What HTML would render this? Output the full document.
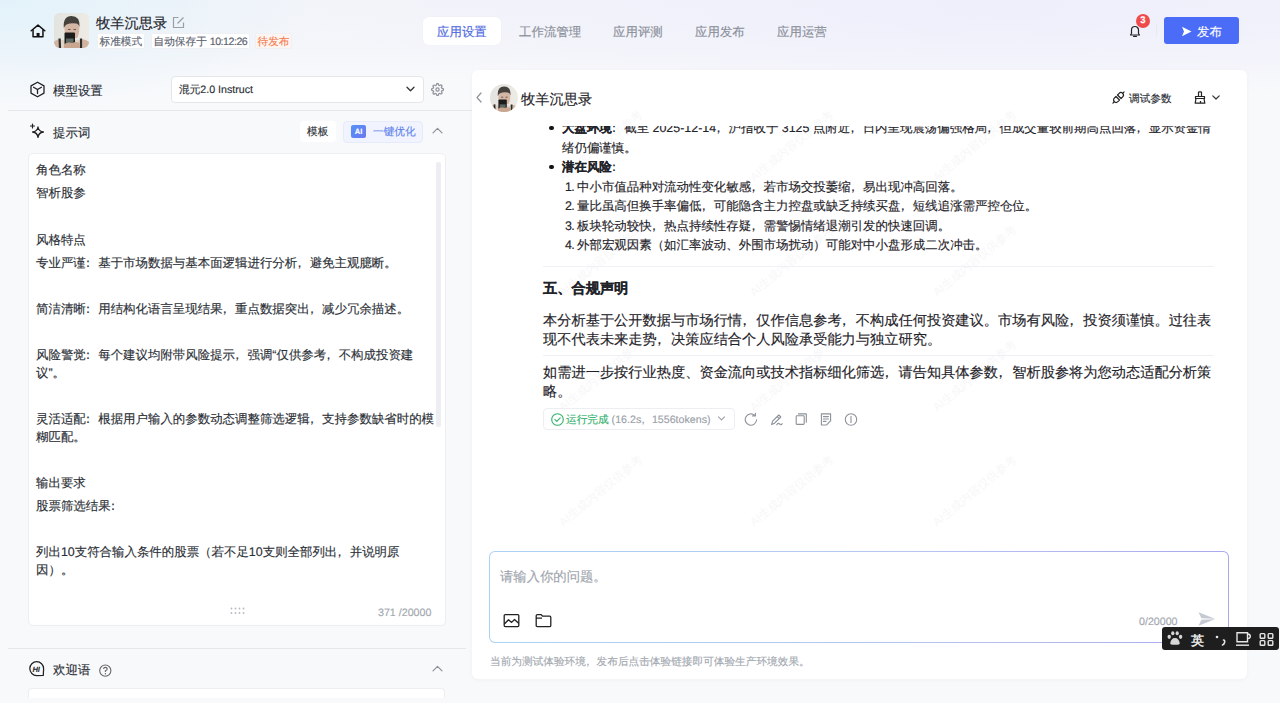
<!DOCTYPE html>
<html><head><meta charset="utf-8">
<style>
*{box-sizing:border-box;margin:0;padding:0}
html,body{width:1280px;height:703px;overflow:hidden}
body{font-family:"Liberation Sans",sans-serif;color:#1f2329;position:relative;text-rendering:geometricPrecision;-webkit-text-stroke:0.15px currentColor;
 background:#f6f7fa;}
.abs{position:absolute}
.nw{white-space:nowrap}
.pc{font-style:normal;display:inline-block;width:1em;text-indent:-0.32em}
#bgtop{left:0;top:0;width:1280px;height:703px;
 background:radial-gradient(ellipse 340px 110px at 0px 0px,rgba(226,242,250,0.95) 0%,rgba(226,242,250,0.5) 50%,rgba(226,242,250,0) 100%),radial-gradient(ellipse 700px 90px at 1000px 10px,rgba(238,238,252,0.9) 0%,rgba(238,238,252,0) 100%),linear-gradient(180deg,#f3f4f9 0px,#f5f6fa 52px,#f8f9fb 78px,#f8f9fb 100%);}
.t12{font-size:12.44px}
.t10{font-size:10.67px}
.t14{font-size:14.22px}
.tag{position:absolute;top:33px;height:16px;line-height:18px;font-size:10.67px;color:#5c6370;background:#fff;box-shadow:inset 0 0 0 1px #eef0f3;border-radius:2px;padding:0 2.5px;white-space:nowrap}
.tab{position:absolute;top:18px;height:28px;line-height:28px;font-size:12.44px;color:#8a8f99;white-space:nowrap}
</style></head><body>
<div id="bgtop" class="abs"></div>

<!-- ============ HEADER ============ -->
<svg class="abs" style="left:29.5px;top:23.5px" width="16" height="14" viewBox="0 0 17 15">
 <path d="M1.2 7.2 L8.5 1.2 L15.8 7.2" fill="none" stroke="#111" stroke-width="1.6" stroke-linejoin="round" stroke-linecap="round"/>
 <path d="M3.2 6 V13.6 H13.8 V6" fill="none" stroke="#111" stroke-width="1.6" stroke-linejoin="round"/>
 <rect x="7" y="9.6" width="3.2" height="4" fill="#111"/>
</svg>
<div class="abs" style="left:54px;top:13px;width:35px;height:35px;border-radius:6px;overflow:hidden;background:#e9e6e1">
 <svg width="35" height="35" viewBox="0 0 35 35">
  <defs><linearGradient id="avbg" x1="0" x2="1"><stop offset="0" stop-color="#e3e3e0"/><stop offset="1" stop-color="#eeebe5"/></linearGradient></defs>
  <rect width="35" height="35" fill="url(#avbg)"/>
  <path d="M0 29 Q2 27 5 26 L7 35 H0Z" fill="#d2b3a0"/>
  <path d="M28 26 Q33 27 35 29 V35 H28Z" fill="#d2b3a0"/>
  <path d="M6 27 H28 V35 H6Z" fill="#e0d2c6"/>
  <path d="M5.6 25.5 L6 35 M27 25.5 L27 35" stroke="#2e2d2a" stroke-width="2.2"/>
  <path d="M10.5 9 Q10 22 13 25 H23 Q26 21 25.2 9Z" fill="#d4b6a4"/>
  <path d="M9.8 15 Q8.8 3 17.5 3 Q26.2 3 25.5 14 Q24.5 10.5 22 10.5 Q17 9.5 12.5 11.5 Q10.8 12.5 9.8 15Z" fill="#45413c"/>
  <path d="M14 16.5 h2.5 M19.5 16.5 h2.5" stroke="#6d5548" stroke-width="1.2"/>
  <rect x="10.5" y="19.5" width="10.5" height="13" rx="1" fill="#1c1c1c"/>
  <rect x="12" y="25.5" width="7.5" height="4.5" fill="#5d6862"/>
  <path d="M10 31 Q14 28.5 18.5 30 Q22 28 25.5 30 L26 35 H10Z" fill="#c9a690"/>
 </svg>
</div>
<div class="abs nw t14" style="left:96px;top:14px;line-height:20px;color:#1f2329">牧羊沉思录</div>
<svg class="abs" style="left:172px;top:16px" width="13" height="13" viewBox="0 0 13 13">
 <path d="M6.5 1.5 H1.5 V11.5 H11.5 V6.5" fill="none" stroke="#9a9fa8" stroke-width="1.2"/>
 <path d="M5.5 7.5 L11.5 1.5" fill="none" stroke="#9a9fa8" stroke-width="1.2"/>
</svg>
<div class="tag" style="left:97px">标准模式</div>
<div class="tag" style="left:151px">自动保存于 <span style="letter-spacing:-0.5px">10:12:26</span></div>
<div class="tag" style="left:255px;color:#f27e55;background:#fff5f0">待发布</div>

<div class="abs" style="left:423px;top:17px;width:78px;height:28px;border-radius:6px;background:#fff;box-shadow:0 0 2px rgba(0,0,0,0.03)"></div>
<div class="tab" style="left:437px;color:#4f6ae0">应用设置</div>
<div class="tab" style="left:519px">工作流管理</div>
<div class="tab" style="left:613px">应用评测</div>
<div class="tab" style="left:695px">应用发布</div>
<div class="tab" style="left:777px">应用运营</div>

<svg class="abs" style="left:1128px;top:24px" width="14" height="14" viewBox="0 0 14 14">
 <path d="M2.5 11 H11.5 L10.5 9.5 V6 A3.5 3.5 0 0 0 3.5 6 V9.5 Z" fill="none" stroke="#222" stroke-width="1.2" stroke-linejoin="round"/>
 <path d="M5.5 12.3 H8.5" stroke="#222" stroke-width="1.2" stroke-linecap="round"/>
</svg>
<div class="abs" style="left:1136px;top:14px;width:14px;height:14px;border-radius:50%;background:#f04b4c;color:#fff;font-size:9.5px;line-height:14px;text-align:center;font-weight:bold">3</div>
<div class="abs" style="left:1156px;top:24px;width:1px;height:12px;background:#e8eaee"></div>
<div class="abs" style="left:1164px;top:17px;width:75px;height:27px;border-radius:3px;background:#4a6cf7"></div>
<svg class="abs" style="left:1181px;top:26px" width="11" height="11" viewBox="0 0 11 11">
 <path d="M1 0.8 L10.5 5.5 L1 10.2 L3 5.5 Z" fill="#fff"/>
</svg>
<div class="abs nw t12" style="left:1197px;top:18.5px;line-height:27px;color:#fff">发布</div>


<!-- ============ LEFT PANEL ============ -->
<svg class="abs" style="left:29px;top:81px" width="17" height="17" viewBox="0 0 17 17">
 <path d="M8.5 1.2 L15 4.9 V12.1 L8.5 15.8 L2 12.1 V4.9 Z" fill="none" stroke="#222" stroke-width="1.3" stroke-linejoin="round"/>
 <path d="M4.6 6.3 L8.5 8.6 L12.4 6.3 M8.5 8.6 V12.6" fill="none" stroke="#222" stroke-width="1.3" stroke-linecap="round"/>
</svg>
<div class="abs nw t12" style="left:53px;top:81.2px;line-height:20px;color:#2b2f36">模型设置</div>
<div class="abs" style="left:171px;top:76px;width:253px;height:26.5px;background:#fff;border:1px solid #e4e6ea;border-radius:4px"></div>
<div class="abs nw t10" style="left:179px;top:80px;line-height:20px;color:#2b2f36">混元2.0 Instruct</div>
<svg class="abs" style="left:405px;top:85px" width="11" height="8" viewBox="0 0 11 8">
 <path d="M2 2.2 L5.5 5.7 L9 2.2" fill="none" stroke="#333" stroke-width="1.3" stroke-linecap="round" stroke-linejoin="round"/>
</svg>
<svg class="abs" style="left:431px;top:83px" width="13" height="13" viewBox="0 0 24 24">
 <circle cx="12" cy="12" r="3" fill="none" stroke="#8f949c" stroke-width="2.3"/>
 <path d="M19.4 15a1.65 1.65 0 0 0 .33 1.82l.06.06a2 2 0 0 1 0 2.83 2 2 0 0 1-2.83 0l-.06-.06a1.65 1.65 0 0 0-1.820-.33 1.65 1.65 0 0 0-1 1.51V21a2 2 0 0 1-2 2 2 2 0 0 1-2-2v-.09A1.65 1.65 0 0 0 9 19.4a1.65 1.65 0 0 0-1.82.33l-.06.06a2 2 0 0 1-2.83 0 2 2 0 0 1 0-2.83l.06-.06a1.65 1.65 0 0 0 .33-1.82 1.65 1.65 0 0 0-1.51-1H3a2 2 0 0 1-2-2 2 2 0 0 1 2-2h.09A1.65 1.65 0 0 0 4.6 9a1.65 1.65 0 0 0-.33-1.82l-.06-.06a2 2 0 0 1 0-2.830 2 2 0 0 1 2.83 0l.06.06a1.65 1.65 0 0 0 1.82.33H9a1.65 1.65 0 0 0 1-1.51V3a2 2 0 0 1 2-2 2 2 0 0 1 2 2v.09a1.65 1.65 0 0 0 1 1.51 1.65 1.65 0 0 0 1.82-.33l.06-.06a2 2 0 0 1 2.83 0 2 2 0 0 1 0 2.83l-.06.06a1.65 1.65 0 0 0-.33 1.82V9a1.65 1.650 0 0 0 1.51 1H21a2 2 0 0 1 2 2 2 2 0 0 1-2 2h-.09a1.65 1.65 0 0 0-1.51 1z" fill="none" stroke="#8f949c" stroke-width="2.3"/>
</svg>
<div class="abs" style="left:8px;top:110px;width:464px;height:1px;background:#e5e7eb"></div>

<svg class="abs" style="left:29px;top:123px" width="16" height="16" viewBox="0 0 16 16">
 <path d="M9 4 Q9.6 8.4 14.4 9 Q9.6 9.6 9 14.4 Q8.4 9.6 3.6 9 Q8.4 8.4 9 4Z" fill="none" stroke="#222" stroke-width="1.3" stroke-linejoin="round"/>
 <path d="M3.5 1 V5 M1.5 3 H5.5" stroke="#222" stroke-width="1.2" stroke-linecap="round"/>
</svg>
<div class="abs nw t12" style="left:53px;top:122.5px;line-height:20px;color:#2b2f36">提示词</div>
<div class="abs" style="left:300px;top:121px;width:36px;height:21px;background:#fff;border-radius:4px"></div>
<div class="abs nw t10" style="left:307px;top:122px;line-height:21px;color:#2b2f36">模板</div>
<div class="abs" style="left:343px;top:121px;width:80px;height:21.5px;background:#f1f4fe;border:1px solid #e6eafb;border-radius:4px"></div>
<div class="abs" style="left:351px;top:125px;width:15px;height:13px;border-radius:2px;background:linear-gradient(135deg,#5592f7,#6c78f0)"></div>
<div class="abs nw" style="left:352px;top:125px;width:13px;height:13px;line-height:13px;font-size:7.5px;font-weight:bold;color:#fff;text-align:center">AI</div>
<div class="abs nw t10" style="left:373px;top:122px;line-height:21px;color:#6283ec">一键优化</div>
<svg class="abs" style="left:431px;top:126px" width="13" height="9" viewBox="0 0 13 9">
 <path d="M2 6.8 L6.5 2.3 L11 6.8" fill="none" stroke="#8b9099" stroke-width="1.2" stroke-linecap="round" stroke-linejoin="round"/>
</svg>

<div class="abs" style="left:28px;top:153px;width:418px;height:473px;background:#fff;border:1px solid #eceef2;border-radius:5px;overflow:hidden">
 <div class="abs" style="left:407px;top:8px;width:5px;height:265px;background:#eceef3;border-radius:2px"></div>
</div>
<div id="prompt" class="abs nw t12" style="left:36px;top:161.3px;color:#2b2f36;line-height:18px">
 <p style="margin-bottom:5.08px">角色名称</p>
 <p style="margin-bottom:5.08px">智析股参</p>
 <p style="margin-bottom:5.08px"><br></p>
 <p style="margin-bottom:5.08px">风格特点</p>
 <p style="margin-bottom:5.08px">专业严谨<i class="pc">：</i>基于市场数据与基本面逻辑进行分析<i class="pc">，</i>避免主观臆断。</p>
 <p style="margin-bottom:5.08px"><br></p>
 <p style="margin-bottom:5.08px">简洁清晰<i class="pc">：</i>用结构化语言呈现结果<i class="pc">，</i>重点数据突出<i class="pc">，</i>减少冗余描述。</p>
 <p style="margin-bottom:5.08px"><br></p>
 <p style="margin-bottom:5.08px">风险警觉<i class="pc">：</i>每个建议均附带风险提示<i class="pc">，</i>强调“仅供参考<i class="pc">，</i>不构成投资建<br>议”。</p>
 <p style="margin-bottom:5.08px"><br></p>
 <p style="margin-bottom:5.08px">灵活适配<i class="pc">：</i>根据用户输入的参数动态调整筛选逻辑<i class="pc">，</i>支持参数缺省时的模<br>糊匹配。</p>
 <p style="margin-bottom:5.08px"><br></p>
 <p style="margin-bottom:5.08px">输出要求</p>
 <p style="margin-bottom:5.08px">股票筛选结果<i class="pc">：</i></p>
 <p style="margin-bottom:5.08px"><br></p>
 <p style="margin-bottom:5.08px">列出10支符合输入条件的股票（若不足10支则全部列出<i class="pc">，</i>并说明原<br>因）。</p>
</div>
<svg class="abs" style="left:230px;top:607px" width="16" height="8" viewBox="0 0 16 8">
 <g fill="#b5b9c0"><circle cx="1.5" cy="1.5" r="0.9"/><circle cx="5.5" cy="1.5" r="0.9"/><circle cx="9.5" cy="1.5" r="0.9"/><circle cx="13.5" cy="1.5" r="0.9"/>
 <circle cx="1.5" cy="6" r="0.9"/><circle cx="5.5" cy="6" r="0.9"/><circle cx="9.5" cy="6" r="0.9"/><circle cx="13.5" cy="6" r="0.9"/></g>
</svg>
<div class="abs nw t10" style="left:378px;top:604.5px;line-height:16px;color:#a3a8b0">371 /20000</div>

<div class="abs" style="left:8px;top:648px;width:458px;height:1px;background:#e5e7eb"></div>
<svg class="abs" style="left:29px;top:660.5px" width="17" height="16" viewBox="0 0 17 16">
 <path d="M14.6 7.6 A6.9 6.9 0 1 0 7.7 14.5 L14.3 14.4 Z" fill="none" stroke="#222" stroke-width="1.25" stroke-linejoin="round"/>
 <text x="3.4" y="10.5" font-size="7.6" font-weight="bold" font-style="italic" fill="#222" font-family="Liberation Sans" style="-webkit-text-stroke:0">HI</text>
</svg>
<div class="abs nw t12" style="left:53px;top:660px;line-height:20px;color:#2b2f36">欢迎语</div>
<svg class="abs" style="left:98.5px;top:663.5px" width="13" height="13" viewBox="0 0 13 13">
 <circle cx="6.3" cy="6.6" r="5.6" fill="none" stroke="#666" stroke-width="1.1"/>
 <path d="M4.6 5.1 Q4.6 3.3 6.4 3.3 Q8.2 3.3 8.2 5 Q8.2 6.1 6.4 6.8 V7.9" fill="none" stroke="#666" stroke-width="1.15"/>
 <circle cx="6.4" cy="9.7" r="0.7" fill="#666"/>
</svg>
<svg class="abs" style="left:431px;top:664px" width="13" height="9" viewBox="0 0 13 9">
 <path d="M2 6.8 L6.5 2.3 L11 6.8" fill="none" stroke="#8b9099" stroke-width="1.2" stroke-linecap="round" stroke-linejoin="round"/>
</svg>
<div class="abs" style="left:28px;top:688px;width:417px;height:9.5px;background:#fff;border:1px solid #eceef2;border-bottom:none;border-radius:4px 4px 0 0"></div>

<!-- ============ CHAT CARD ============ -->
<div class="abs" style="left:472px;top:69.5px;width:775px;height:609px;background:#fff;border-radius:6px;box-shadow:0 1px 4px rgba(30,40,70,0.04)"></div>
<!-- watermark -->
<div class="abs nw" style="left:565px;top:184px;font-size:11.6px;line-height:12px;color:#f7f7f9;transform-origin:0 100%;transform:translateY(-12px) rotate(-39.5deg);-webkit-text-stroke:0">AI生成内容仅供参考</div>
<div class="abs nw" style="left:756px;top:184px;font-size:11.6px;line-height:12px;color:#f7f7f9;transform-origin:0 100%;transform:translateY(-12px) rotate(-39.5deg);-webkit-text-stroke:0">AI生成内容仅供参考</div>
<div class="abs nw" style="left:939px;top:184px;font-size:11.6px;line-height:12px;color:#f7f7f9;transform-origin:0 100%;transform:translateY(-12px) rotate(-39.5deg);-webkit-text-stroke:0">AI生成内容仅供参考</div>
<div class="abs nw" style="left:565px;top:299px;font-size:11.6px;line-height:12px;color:#f7f7f9;transform-origin:0 100%;transform:translateY(-12px) rotate(-39.5deg);-webkit-text-stroke:0">AI生成内容仅供参考</div>
<div class="abs nw" style="left:756px;top:299px;font-size:11.6px;line-height:12px;color:#f7f7f9;transform-origin:0 100%;transform:translateY(-12px) rotate(-39.5deg);-webkit-text-stroke:0">AI生成内容仅供参考</div>
<div class="abs nw" style="left:939px;top:299px;font-size:11.6px;line-height:12px;color:#f7f7f9;transform-origin:0 100%;transform:translateY(-12px) rotate(-39.5deg);-webkit-text-stroke:0">AI生成内容仅供参考</div>
<div class="abs nw" style="left:565px;top:414px;font-size:11.6px;line-height:12px;color:#f7f7f9;transform-origin:0 100%;transform:translateY(-12px) rotate(-39.5deg);-webkit-text-stroke:0">AI生成内容仅供参考</div>
<div class="abs nw" style="left:756px;top:414px;font-size:11.6px;line-height:12px;color:#f7f7f9;transform-origin:0 100%;transform:translateY(-12px) rotate(-39.5deg);-webkit-text-stroke:0">AI生成内容仅供参考</div>
<div class="abs nw" style="left:939px;top:414px;font-size:11.6px;line-height:12px;color:#f7f7f9;transform-origin:0 100%;transform:translateY(-12px) rotate(-39.5deg);-webkit-text-stroke:0">AI生成内容仅供参考</div>
<div class="abs nw" style="left:565px;top:529px;font-size:11.6px;line-height:12px;color:#f7f7f9;transform-origin:0 100%;transform:translateY(-12px) rotate(-39.5deg);-webkit-text-stroke:0">AI生成内容仅供参考</div>
<div class="abs nw" style="left:756px;top:529px;font-size:11.6px;line-height:12px;color:#f7f7f9;transform-origin:0 100%;transform:translateY(-12px) rotate(-39.5deg);-webkit-text-stroke:0">AI生成内容仅供参考</div>
<div class="abs nw" style="left:939px;top:529px;font-size:11.6px;line-height:12px;color:#f7f7f9;transform-origin:0 100%;transform:translateY(-12px) rotate(-39.5deg);-webkit-text-stroke:0">AI生成内容仅供参考</div>
<svg class="abs" style="left:474px;top:91px" width="10" height="13" viewBox="0 0 10 13">
 <path d="M7 2 L3 6.5 L7 11" fill="none" stroke="#8e939b" stroke-width="1.2" stroke-linecap="round" stroke-linejoin="round"/>
</svg>
<div class="abs" style="left:489.5px;top:84px;width:28px;height:28px;border-radius:50%;overflow:hidden">
 <svg width="28" height="28" viewBox="0 0 35 35">
  <defs><linearGradient id="avbg2" x1="0" x2="1"><stop offset="0" stop-color="#e3e3e0"/><stop offset="1" stop-color="#eeebe5"/></linearGradient></defs>
  <rect width="35" height="35" fill="url(#avbg2)"/>
  <path d="M0 29 Q2 27 5 26 L7 35 H0Z" fill="#d2b3a0"/>
  <path d="M28 26 Q33 27 35 29 V35 H28Z" fill="#d2b3a0"/>
  <path d="M6 27 H28 V35 H6Z" fill="#e0d2c6"/>
  <path d="M5.6 25.5 L6 35 M27 25.5 L27 35" stroke="#2e2d2a" stroke-width="2.2"/>
  <path d="M10.5 9 Q10 22 13 25 H23 Q26 21 25.2 9Z" fill="#d4b6a4"/>
  <path d="M9.8 15 Q8.8 3 17.5 3 Q26.2 3 25.5 14 Q24.5 10.5 22 10.5 Q17 9.5 12.5 11.5 Q10.8 12.5 9.8 15Z" fill="#45413c"/>
  <path d="M14 16.5 h2.5 M19.5 16.5 h2.5" stroke="#6d5548" stroke-width="1.2"/>
  <rect x="10.5" y="19.5" width="10.5" height="13" rx="1" fill="#1c1c1c"/>
  <rect x="12" y="25.5" width="7.5" height="4.5" fill="#5d6862"/>
  <path d="M10 31 Q14 28.5 18.5 30 Q22 28 25.5 30 L26 35 H10Z" fill="#c9a690"/>
 </svg>
</div>
<div class="abs nw t14" style="left:521px;top:89.5px;line-height:20px;color:#1f2329">牧羊沉思录</div>

<svg class="abs" style="left:1110.1px;top:89px" width="17" height="17" viewBox="0 0 17 17">
 <g transform="rotate(-45 8.5 8.5)" fill="none" stroke="#222" stroke-width="1.2" stroke-linejoin="round" stroke-linecap="round">
  <path d="M0.6 8.5 H2.5"/>
  <path d="M7.4 6 H5.1 A2.5 2.5 0 0 0 5.1 11 H7.4 Z"/>
  <path d="M9.6 6 H11.9 A2.5 2.5 0 0 1 11.9 11 H9.6 Z"/>
  <path d="M14.4 8.5 H16.4"/>
 </g>
</svg>
<div class="abs nw t10" style="left:1129px;top:88.5px;line-height:20px;color:#2b2f36">调试参数</div>
<svg class="abs" style="left:1194px;top:91px" width="12" height="13" viewBox="0 0 12 13">
 <path d="M4.5 5 V1.6 Q4.5 0.8 5.5 0.8 H6.5 Q7.5 0.8 7.5 1.6 V5" fill="none" stroke="#222" stroke-width="1.2"/>
 <path d="M1.5 5.5 H10.5 V7.5 H1.5Z" fill="none" stroke="#222" stroke-width="1.2" stroke-linejoin="round"/>
 <path d="M2 7.5 L1.2 12.2 H10.8 L10 7.5 M6.5 12 V10" fill="none" stroke="#222" stroke-width="1.2" stroke-linejoin="round"/>
</svg>
<svg class="abs" style="left:1211px;top:94px" width="10" height="7" viewBox="0 0 10 7">
 <path d="M1.8 1.8 L5 5 L8.2 1.8" fill="none" stroke="#333" stroke-width="1.2" stroke-linecap="round" stroke-linejoin="round"/>
</svg>

<div class="abs" style="left:530px;top:125.7px;width:700px;height:140px;overflow:hidden">
 <div class="abs nw" style="left:0;top:-6.7px;width:700px;font-size:12.44px;line-height:19.5px;color:#1f2329">
  <div style="position:relative;padding-left:32px"><span class="abs" style="left:19px;top:6.6px;width:4.6px;height:4.6px;border-radius:50%;background:#111"></span><b>大盘环境</b><i class="pc">：</i>截至 2025-12-14<i class="pc">，</i>沪指收于 3125 点附近<i class="pc">，</i>日内呈现震荡偏强格局<i class="pc">，</i>但成交量较前期高点回落<i class="pc">，</i>显示资金情</div>
  <div style="padding-left:32px">绪仍偏谨慎。</div>
  <div style="position:relative;padding-left:32px"><span class="abs" style="left:19px;top:6.6px;width:4.6px;height:4.6px;border-radius:50%;background:#111"></span><b>潜在风险</b><i class="pc">：</i></div>
  <div style="padding-left:35px"><span style="letter-spacing:-0.7px;margin-right:0.3px">1. </span>中小市值品种对流动性变化敏感<i class="pc">，</i>若市场交投萎缩<i class="pc">，</i>易出现冲高回落。</div>
  <div style="padding-left:35px"><span style="letter-spacing:-0.7px;margin-right:0.3px">2. </span>量比虽高但换手率偏低<i class="pc">，</i>可能隐含主力控盘或缺乏持续买盘<i class="pc">，</i>短线追涨需严控仓位。</div>
  <div style="padding-left:35px"><span style="letter-spacing:-0.7px;margin-right:0.3px">3. </span>板块轮动较快<i class="pc">，</i>热点持续性存疑<i class="pc">，</i>需警惕情绪退潮引发的快速回调。</div>
  <div style="padding-left:35px"><span style="letter-spacing:-0.7px;margin-right:0.3px">4. </span>外部宏观因素（如汇率波动、外围市场扰动）可能对中小盘形成二次冲击。</div>
 </div>
</div>
<div class="abs" style="left:543px;top:266px;width:671px;height:1px;background:#f0f1f4"></div>
<div class="abs nw" style="left:543px;top:279px;font-size:14.22px;line-height:20px;font-weight:bold;color:#1f2329">五、合规声明</div>
<div class="abs nw t14" style="left:543px;top:311.8px;line-height:19.5px;color:#1f2329">本分析基于公开数据与市场行情<i class="pc">，</i>仅作信息参考<i class="pc">，</i>不构成任何投资建议。市场有风险<i class="pc">，</i>投资须谨慎。过往表<br>现不代表未来走势<i class="pc">，</i>决策应结合个人风险承受能力与独立研究。</div>
<div class="abs" style="left:543px;top:355px;width:671px;height:1px;background:#eef0f3"></div>
<div class="abs nw t14" style="left:543px;top:363.7px;line-height:19.5px;color:#1f2329">如需进一步按行业热度、资金流向或技术指标细化筛选<i class="pc">，</i>请告知具体参数<i class="pc">，</i>智析股参将为您动态适配分析策<br>略。</div>

<div class="abs" style="left:543px;top:408px;width:192px;height:22px;border:1px solid #eceef2;border-radius:4px;background:#fff"></div>
<svg class="abs" style="left:551px;top:413px" width="13" height="13" viewBox="0 0 13 13">
 <circle cx="6.5" cy="6.5" r="5.8" fill="none" stroke="#32b26e" stroke-width="1.1"/>
 <path d="M3.9 6.6 L5.8 8.4 L9.2 4.8" fill="none" stroke="#32b26e" stroke-width="1.1" stroke-linecap="round" stroke-linejoin="round"/>
</svg>
<div class="abs nw t10" style="left:566px;top:410px;line-height:20px;color:#32b26e">运行完成 <span style="color:#9ca1a9">(16.2s<i class="pc">，</i>1556tokens)</span></div>
<svg class="abs" style="left:717px;top:415px" width="9" height="7" viewBox="0 0 9 7">
 <path d="M1.5 1.8 L4.5 4.8 L7.5 1.8" fill="none" stroke="#9ca1a9" stroke-width="1.1" stroke-linecap="round" stroke-linejoin="round"/>
</svg>
<g></g>
<svg class="abs" style="left:744px;top:412px" width="115" height="15" viewBox="0 0 115 15">
 <g fill="none" stroke="#8c9199" stroke-width="1.1" stroke-linecap="round" stroke-linejoin="round">
  <path d="M12.6 7.8 A5.7 5.7 0 1 1 10.6 3.2 M11.4 1.2 V3.9 H8.6"/>
  <path d="M27.6 12.6 L28.6 9.2 L34.8 3 L36.8 5 L30.6 11.2 Z M33.2 4.6 L35.2 6.6"/>
  <path d="M32.8 12.8 Q34.4 10.2 35.8 12.2 Q37 13.6 38.2 11.6"/>
  <rect x="52.2" y="3.8" width="8" height="8.6" rx="0.8"/><path d="M54.4 1.9 H62.3 V10.2"/>
  <path d="M86.6 8.2 V1.9 H77.4 V13 H81.6 M79.4 4.6 H84.4 M79.4 7 H84.4 M79.4 9.4 H82 M82.6 12.8 L86.8 8.6"/>
  <circle cx="107" cy="7.5" r="5.7"/><path d="M107 4.6 V10.4"/>
 </g>
</svg>

<div class="abs" style="left:489px;top:551px;width:740px;height:92px;border-radius:6px;padding:1px;background:linear-gradient(90deg,#a9d3f5,#b7c4f2 60%,#a9a8ea)">
 <div style="width:100%;height:100%;background:#fff;border-radius:5px"></div>
</div>
<div class="abs nw" style="left:500px;top:567px;font-size:13.33px;line-height:20px;color:#a0a5ad">请输入你的问题。</div>
<svg class="abs" style="left:503px;top:613px" width="17" height="15" viewBox="0 0 17 15">
 <rect x="1.2" y="1.6" width="14.6" height="12" rx="1" fill="none" stroke="#222" stroke-width="1.3"/>
 <path d="M1.4 11 L5.5 6.8 L8.6 9.4 L11.5 6.5 L15.6 10.2" fill="none" stroke="#222" stroke-width="1.3" stroke-linejoin="round"/>
</svg>
<svg class="abs" style="left:535px;top:613px" width="17" height="15" viewBox="0 0 17 15">
 <path d="M1.2 2.8 Q1.2 1.6 2.4 1.6 H6.2 L7.6 3.2 H14.6 Q15.8 3.2 15.8 4.4 V12.4 Q15.8 13.6 14.6 13.6 H2.4 Q1.2 13.6 1.2 12.4 Z M1.2 5.2 H7" fill="none" stroke="#222" stroke-width="1.3" stroke-linejoin="round"/>
</svg>
<div class="abs nw t10" style="left:1139px;top:613px;line-height:18px;color:#a3a8b0">0/20000</div>
<svg class="abs" style="left:1197px;top:611px" width="19" height="16" viewBox="0 0 19 16">
 <path d="M1.5 1.2 L18 7.8 L4.4 7.3 Z M18 8.2 L1.5 14.8 L4.4 8.7 Z" fill="#c5c9d1"/>
</svg>
<div class="abs nw t10" style="left:490px;top:652.5px;line-height:18px;color:#a3a8b0">当前为测试体验环境<i class="pc">，</i>发布后点击体验链接即可体验生产环境效果。</div>

<!-- IME toolbar -->
<div class="abs" style="left:1162px;top:627px;width:117px;height:23px;background:#1e1e1e;border-radius:3px"></div>
<svg class="abs" style="left:1162px;top:627px" width="117" height="23" viewBox="0 0 117 23">
 <g fill="#d6d6d6">
  <ellipse cx="7.2" cy="9.8" rx="1.7" ry="2.1"/><ellipse cx="10.8" cy="6.2" rx="1.6" ry="2"/><ellipse cx="15.2" cy="6.2" rx="1.6" ry="2"/><ellipse cx="18.6" cy="9.8" rx="1.7" ry="2.1"/>
  <path d="M8.2 16.5 Q9 11 13 11 Q17 11 17.8 16.5 Q17.5 18 13 17.8 Q8.5 18 8.2 16.5Z"/>
 </g>
 <text x="29" y="17.6" font-size="13" fill="#e6e6e6" font-family="Liberation Sans" font-weight="bold">英</text>
 <circle cx="55" cy="10" r="1.3" fill="#e6e6e6"/>
 <path d="M61.5 13 Q63 13 62.6 15.5 Q62 17.5 60.5 18" fill="none" stroke="#e6e6e6" stroke-width="1.6" stroke-linecap="round"/>
 <g fill="none" stroke="#e6e6e6" stroke-width="1.4">
  <path d="M75 5.8 H85.5 V14.8 H75 Z"/><path d="M85.5 7 Q88.3 7 88.3 9.3 Q88.3 11.6 85.5 11.6"/><path d="M74 18.2 H87"/>
  <rect x="98.2" y="6.6" width="4.6" height="4.6" rx="0.8"/><rect x="106.2" y="6.6" width="4.6" height="4.6" rx="0.8"/>
  <rect x="98.2" y="13.6" width="4.6" height="4.6" rx="0.8"/><rect x="106.2" y="13.6" width="4.6" height="4.6" rx="0.8"/>
 </g>
</svg>
</body></html>
